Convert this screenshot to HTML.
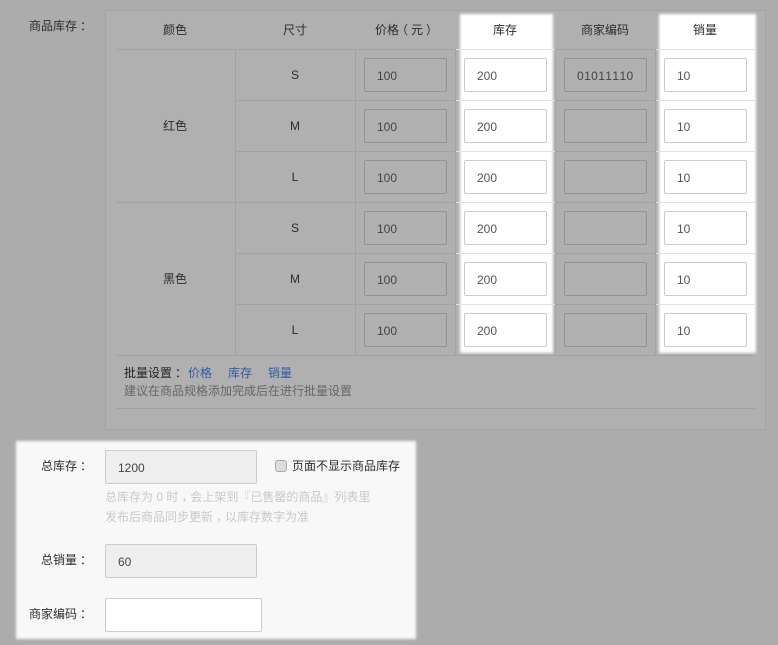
<!DOCTYPE html>
<html lang="zh">
<head>
<meta charset="utf-8">
<style>
html,body{margin:0;padding:0}
body{width:778px;height:645px;position:relative;overflow:hidden;background:#acacac;font:12px/20px "Liberation Sans","Noto Sans CJK SC",sans-serif;font-kerning:none;color:#2c2c2c}
div{position:absolute;box-sizing:border-box}
.box{left:105px;top:10px;width:661px;height:420px;background:#b0b0b0;border:1px solid #a2a2a2}
.h{height:1px;background:#a2a2a2}
.v{width:1px;background:#a2a2a2}
.t{width:100px;text-align:center;height:20px;white-space:nowrap}
.i{width:83px;height:34px;border:1px solid #929292;border-radius:2px;padding-left:12px;line-height:34px;color:#444}
.w{border-color:#ccc;background:#fff;color:#555}
.hl{background:#fff;filter:blur(1.2px)}
.wl{height:1px;background:#e4e4e4}
.l{text-align:right;width:89px;left:0;white-space:nowrap;color:#2c2c2c}
.g{background:#eee;border:1px solid #ccc;border-radius:2px;width:152px;height:34px;left:105px;padding-left:12px;line-height:34px;color:#444}
.help{left:105px;color:#c8c8c8;white-space:nowrap}
s{text-decoration:none;position:relative;left:3px}
u{text-decoration:none;position:relative;left:-3px}
</style>
</head>
<body>
<div class="l" style="top:16px">商品库存<s>：</s></div>
<div class="box"></div>

<div class="h" style="left:116px;top:49px;width:639px"></div>
<div class="h" style="left:236px;top:100px;width:519px"></div>
<div class="h" style="left:236px;top:151px;width:519px"></div>
<div class="h" style="left:116px;top:202px;width:639px"></div>
<div class="h" style="left:236px;top:253px;width:519px"></div>
<div class="h" style="left:236px;top:304px;width:519px"></div>
<div class="h" style="left:116px;top:355px;width:639px"></div>
<div class="h" style="left:116px;top:408px;width:639px"></div>
<div class="v" style="left:235px;top:50px;height:306px"></div>
<div class="v" style="left:355px;top:50px;height:306px"></div>
<div class="v" style="left:455px;top:50px;height:306px"></div>
<div class="v" style="left:555px;top:50px;height:306px"></div>
<div class="v" style="left:655px;top:50px;height:306px"></div>

<div class="t" style="left:125px;top:20px">颜色</div>
<div class="t" style="left:245px;top:20px">尺寸</div>
<div class="t" style="left:355px;top:20px">价格<u>（</u>元<s>）</s></div>
<div class="t" style="left:555px;top:20px">商家编码</div>
<div class="t" style="left:125px;top:116px">红色</div>
<div class="t" style="left:125px;top:269px">黑色</div>
<div class="t" style="left:245px;top:65px">S</div>
<div class="t" style="left:245px;top:116px">M</div>
<div class="t" style="left:245px;top:167px">L</div>
<div class="t" style="left:245px;top:218px">S</div>
<div class="t" style="left:245px;top:269px">M</div>
<div class="t" style="left:245px;top:320px">L</div>

<div class="i" style="left:364px;top:58px">100</div>
<div class="i" style="left:364px;top:109px">100</div>
<div class="i" style="left:364px;top:160px">100</div>
<div class="i" style="left:364px;top:211px">100</div>
<div class="i" style="left:364px;top:262px">100</div>
<div class="i" style="left:364px;top:313px">100</div>

<div class="i" style="left:564px;top:58px;letter-spacing:.4px">01011110</div>
<div class="i" style="left:564px;top:109px"></div>
<div class="i" style="left:564px;top:160px"></div>
<div class="i" style="left:564px;top:211px"></div>
<div class="i" style="left:564px;top:262px"></div>
<div class="i" style="left:564px;top:313px"></div>

<div class="hl" style="left:460px;top:14px;width:93px;height:339px"></div>
<div class="hl" style="left:659px;top:14px;width:97px;height:339px"></div>

<div class="t" style="left:455px;top:20px">库存</div>
<div class="t" style="left:655px;top:20px">销量</div>

<div class="wl" style="left:456px;top:49px;width:99px"></div>
<div class="wl" style="left:456px;top:100px;width:99px"></div>
<div class="wl" style="left:456px;top:151px;width:99px"></div>
<div class="wl" style="left:456px;top:202px;width:99px"></div>
<div class="wl" style="left:456px;top:253px;width:99px"></div>
<div class="wl" style="left:456px;top:304px;width:99px"></div>
<div class="wl" style="left:656px;top:49px;width:99px"></div>
<div class="wl" style="left:656px;top:100px;width:99px"></div>
<div class="wl" style="left:656px;top:151px;width:99px"></div>
<div class="wl" style="left:656px;top:202px;width:99px"></div>
<div class="wl" style="left:656px;top:253px;width:99px"></div>
<div class="wl" style="left:656px;top:304px;width:99px"></div>

<div class="i w" style="left:464px;top:58px">200</div>
<div class="i w" style="left:464px;top:109px">200</div>
<div class="i w" style="left:464px;top:160px">200</div>
<div class="i w" style="left:464px;top:211px">200</div>
<div class="i w" style="left:464px;top:262px">200</div>
<div class="i w" style="left:464px;top:313px">200</div>

<div class="i w" style="left:664px;top:58px">10</div>
<div class="i w" style="left:664px;top:109px">10</div>
<div class="i w" style="left:664px;top:160px">10</div>
<div class="i w" style="left:664px;top:211px">10</div>
<div class="i w" style="left:664px;top:262px">10</div>
<div class="i w" style="left:664px;top:313px">10</div>

<div style="left:124px;top:363px;white-space:nowrap;color:#222">批量设置<s>：</s></div>
<div style="left:188px;top:363px;color:#2f5aa8;white-space:nowrap">价格</div>
<div style="left:228px;top:363px;color:#2f5aa8;white-space:nowrap">库存</div>
<div style="left:268px;top:363px;color:#2f5aa8;white-space:nowrap">销量</div>
<div style="left:124px;top:381px;color:#666;white-space:nowrap">建议在商品规格添加完成后在进行批量设置</div>

<div style="left:16px;top:441px;width:400px;height:198px;background:#f8f8f8;filter:blur(1.2px)"></div>
<div class="l" style="top:456px">总库存<s>：</s></div>
<div class="g" style="top:450px">1200</div>
<div style="left:275px;top:460px;width:12px;height:12px;background:#dcdcdc;border:1px solid #aaa;border-radius:3px"></div>
<div style="left:292px;top:456px;white-space:nowrap;color:#2c2c2c">页面不显示商品库存</div>
<div class="help" style="top:487px">总库存为 0 时<s>，</s>会上架到『已售罄的商品』列表里</div>
<div class="help" style="top:507px">发布后商品同步更新<s>，</s>以库存数字为准</div>
<div class="l" style="top:550px">总销量<s>：</s></div>
<div class="g" style="top:544px">60</div>
<div class="l" style="top:604px">商家编码<s>：</s></div>
<div class="g" style="top:598px;width:157px;background:#fff"></div>
</body>
</html>
